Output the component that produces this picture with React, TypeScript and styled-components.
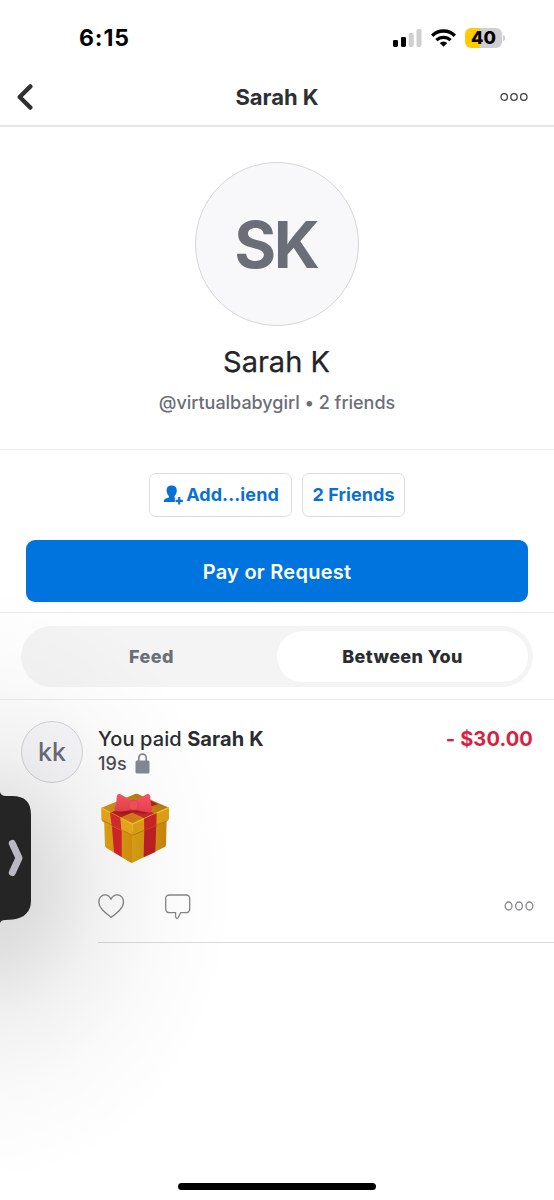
import React from "react";
import styled, { createGlobalStyle } from "styled-components";

const GlobalStyle = createGlobalStyle`
  * { box-sizing: border-box; }
  body { margin: 0; background: #fff; font-family: Inter, "Liberation Sans", sans-serif; }
  button { font-family: inherit; margin: 0; padding: 0; border: 0; background: none; }
  svg { display: block; flex: none; }
`;

const Screen = styled.div`
  position: relative;
  width: 554px;
  height: 1200px;
  overflow: hidden;
  background: #fff;
  display: flex;
  flex-direction: column;
`;

const StatusBar = styled.div`
  height: 69px;
  padding: 6px 49px 0 79px;
  display: flex;
  align-items: center;
  justify-content: space-between;
`;

const Clock = styled.div`
  font-size: 23px;
  font-weight: 700;
  color: #000;
  letter-spacing: 0.9px;
`;

const StatusIcons = styled.div`
  display: flex;
  align-items: center;
`;

const WifiSlot = styled.div`
  margin-left: 9px;
`;

const Battery = styled.div`
  margin-left: 9px;
  width: 37px;
  height: 20px;
  border-radius: 6px;
  background: linear-gradient(90deg, #ffcc00 0 41%, #cfcfcf 41%);
  font-size: 18px;
  line-height: 20px;
  font-weight: 800;
  text-align: center;
  color: #000;
`;

const BatteryTip = styled.div`
  width: 2px;
  height: 6px;
  margin-left: 1px;
  border-radius: 0 3px 3px 0;
  background: #cfcfcf;
`;

const NavBar = styled.header`
  height: 58px;
  padding: 0 25px 0 15px;
  border-bottom: 2px solid #e8e8e9;
  display: grid;
  grid-template-columns: 60px 1fr 50px;
  align-items: center;
`;

const NavTitle = styled.h1`
  margin: 0;
  font-size: 22px;
  font-weight: 700;
  letter-spacing: -0.05px;
  text-align: center;
  color: #2f3033;
`;

const MoreButton = styled.button`
  justify-self: end;
`;

const Profile = styled.section`
  height: 323px;
  padding-top: 35px;
  border-bottom: 1px solid #ebebec;
  display: flex;
  flex-direction: column;
  align-items: center;
`;

const Avatar = styled.div<{ $size: number; $font: number; $weight: number; $spacing?: number }>`
  width: ${(p) => p.$size}px;
  height: ${(p) => p.$size}px;
  flex: none;
  border-radius: 50%;
  border: 1px solid #d5d6da;
  background: ${(p) => (p.$size > 100 ? "#f8f8fb" : "rgba(248, 248, 251, 0.8)")};
  color: #6b6e76;
  font-size: ${(p) => p.$font}px;
  font-weight: ${(p) => p.$weight};
  letter-spacing: ${(p) => p.$spacing ?? 0}px;
  text-indent: ${(p) => p.$spacing ?? 0}px;
  display: flex;
  align-items: center;
  justify-content: center;
`;

const ProfileName = styled.h2`
  margin: 18px 0 0;
  padding-right: 1px;
  font-size: 29px;
  line-height: 36px;
  font-weight: 400;
  color: #232427;
  -webkit-text-stroke: 0.25px #232427;
`;

const Handle = styled.div`
  margin-top: 11px;
  font-size: 18px;
  line-height: 24px;
  font-weight: 500;
  letter-spacing: -0.03px;
  color: #6b6e76;
`;

const Actions = styled.section`
  height: 163px;
  padding: 23px 26px 0;
  border-bottom: 1px solid #ebebec;
`;

const ChipRow = styled.div`
  display: flex;
  justify-content: center;
  gap: 10px;
`;

const Chip = styled.button<{ $width: number }>`
  width: ${(p) => p.$width}px;
  height: 44px;
  padding-bottom: 1px;
  border: 1.5px solid #dcdde1;
  border-radius: 7px;
  background: #fff;
  color: #0a70d6;
  font-size: 18px;
  font-weight: 650;
  letter-spacing: 0.08px;
  white-space: nowrap;
  display: flex;
  align-items: center;
  justify-content: center;
  gap: 3px;
`;

const PayButton = styled.button`
  margin-top: 23px;
  padding-top: 1px;
  width: 502px;
  height: 62px;
  border-radius: 9px;
  background: #0074de;
  color: #fff;
  font-size: 20px;
  font-weight: 600;
  letter-spacing: 0.25px;
`;

const TabSection = styled.section`
  height: 87px;
  padding: 13px 21px 0;
  border-bottom: 1px solid #ebebec;
`;

const Tabs = styled.div`
  height: 61px;
  padding: 5px;
  border-radius: 31px;
  background: #f4f4f4;
  display: grid;
  grid-template-columns: 251px 251px;
`;

const Tab = styled.button<{ $active?: boolean }>`
  border-radius: 26px;
  background: ${(p) => (p.$active ? "#fff" : "transparent")};
  color: ${(p) => (p.$active ? "#2b2c2f" : "#6b6e76")};
  font-size: 18px;
  font-weight: 800;
  letter-spacing: 0.4px;
`;

const Story = styled.article`
  padding: 21px 0 0 21px;
  display: flex;
  gap: 15px;
`;

const StoryBody = styled.div`
  flex: 1;
  height: 222px;
  border-bottom: 1px solid #d9dadd;
  display: flex;
  flex-direction: column;
`;

const StoryHead = styled.div`
  margin-top: 4px;
  padding-right: 21px;
  display: flex;
  justify-content: space-between;
  font-size: 20px;
  line-height: 28px;
  font-weight: 500;
  letter-spacing: 0.1px;
  color: #2b2c2f;
  b { font-weight: 650; }
`;

const Amount = styled.span`
  font-weight: 650;
  letter-spacing: 0.15px;
  color: #d9213f;
`;

const Meta = styled.div`
  height: 22px;
  padding-bottom: 2px;
  display: flex;
  align-items: center;
  gap: 8px;
  font-size: 18px;
  font-weight: 450;
  letter-spacing: 0.1px;
  color: #4c4d52;
`;

const GiftSlot = styled.div`
  margin: 10px 0 0 -8px;
`;

const Reactions = styled.div`
  margin-top: 18px;
  padding-right: 20px;
  display: flex;
  align-items: center;
`;

const CommentSlot = styled.div`
  flex: 1;
  padding-left: 40px;
`;

const Shade = styled.div`
  position: absolute;
  left: 0;
  top: 540px;
  width: 300px;
  height: 660px;
  pointer-events: none;
  background: radial-gradient(
    ellipse 245px 300px at -10px 345px,
    rgba(0, 0, 0, 0.16) 0%,
    rgba(0, 0, 0, 0.12) 22%,
    rgba(0, 0, 0, 0.055) 45%,
    rgba(0, 0, 0, 0.02) 70%,
    rgba(0, 0, 0, 0.008) 88%,
    rgba(0, 0, 0, 0) 100%
  );
`;

const DrawerHandle = styled.div`
  position: absolute;
  left: 0;
  top: 792px;
`;

const HomeIndicator = styled.div`
  margin: auto auto 10px 178px;
  width: 198px;
  height: 7px;
  border-radius: 4px;
  background: #000;
`;

const Signal = () => (
  <svg width="29" height="18" viewBox="0 0 29 18">
    <rect x="0" y="11" width="5" height="7" rx="1.4" />
    <rect x="8" y="8" width="5" height="10" rx="1.4" />
    <rect x="15.7" y="4" width="5" height="14" rx="1.4" fill="#cfcfcf" />
    <rect x="23.5" y="0" width="5" height="18" rx="1.4" fill="#cfcfcf" />
  </svg>
);

const Wifi = () => (
  <svg width="25" height="18" viewBox="0 0 25 18">
    <path d="M1.2 6.700C7.400.5 17.600.5 23.800 6.700" fill="none" stroke="#000" strokeWidth="3.400" />
    <path d="M5.400 11.200C9.400 7.300 15.600 7.300 19.600 11.200" fill="none" stroke="#000" strokeWidth="3.200" />
    <path d="M8.700 14.100q3.800-3 7.600 0L12.500 17.800z" />
  </svg>
);

const Back = () => (
  <svg width="18" height="28" viewBox="0 0 18 28">
    <path d="M15.400 3.400 4.700 14l10.700 10.600" fill="none" stroke="#2f3033" strokeWidth="4.3" strokeLinecap="round" strokeLinejoin="round" />
  </svg>
);

const Dots = ({ color, rx, ry, gap }: { color: string; rx: number; ry: number; gap: number }) => (
  <svg width="30" height="12" viewBox="0 0 30 12" fill="none" stroke={color} strokeWidth="1.3">
    {[-1, 0, 1].map((i) => (
      <ellipse key={i} cx={15 + i * gap} cy="6" rx={rx} ry={ry} />
    ))}
  </svg>
);

const AddPerson = () => (
  <svg width="21" height="20" viewBox="0 0 21 20" fill="#0a70d6">
    <g transform="translate(1 0)">
      <path d="M8.600.4c3.300 0 5.300 1.900 5.200 5.200-.1 2.500-1 4.400-2.300 5.500v1.500l2 .9v3.600H.8c0-2.700 1-3.300 5.100-4.500v-1.500C4.600 9.800 3.700 8 3.600 5.600 3.500 2.300 5.400.4 8.600.4z" />
      <path d="M16.200 11v9M11.900 15.500h8.600" stroke="#fff" strokeWidth="4.500" />
      <path d="M16.200 12v7.500M12.500 15.800h7.400" stroke="#0a70d6" strokeWidth="2.200" />
    </g>
  </svg>
);

const Lock = () => (
  <svg width="15" height="21" viewBox="0 0 15 21">
    <path d="M3.800 9V4.800a3.700 3.700 0 0 1 7.400 0V9" fill="none" stroke="#858792" strokeWidth="1.700" />
    <rect x="0.500" y="7.500" width="14" height="13" rx="1.500" fill="#858792" />
  </svg>
);

const Gift = () => (
  <svg width="90" height="90" viewBox="0 0 270 270">
    <defs>
      <linearGradient id="left" x1="0" x2="1"><stop stopColor="#e3a414" /><stop offset="1" stopColor="#d6900f" /></linearGradient>
      <linearGradient id="right" x1="0" x2="1"><stop stopColor="#dba016" /><stop offset="1" stopColor="#c98509" /></linearGradient>
      <linearGradient id="top" x1="0" x2="1" y1="1" y2="0"><stop stopColor="#e6a41d" /><stop offset="1" stopColor="#a96d0c" /></linearGradient>
      <linearGradient id="bow" x1="0" x2="0" y1="0" y2="1"><stop stopColor="#fb5664" /><stop offset="1" stopColor="#e9404f" /></linearGradient>
    </defs>
    <path d="M42 100 126 140V234Q120 232 114 228L48 188Q45 186 45 182z" fill="url(#left)" />
    <path d="M126 140 230 100 228 180Q228 184 224 186L126 234z" fill="url(#right)" />
    <path d="M65 112 95 126V216L72 202z" fill="#d5232b" />
    <path d="M163 125 199 110 196 201 161 217z" fill="#bd2025" />
    <path d="M33 69 130 29Q140 24 148 29L237 68 127 118z" fill="url(#top)" />
    <path d="M60 83 170 42 205 57 88 99z" fill="#b32020" />
    <path d="M80 64 162 100 196 86 120 52z" fill="#c5292a" />
    <path d="M90 98 126 83 160 98 127 114z" fill="#d67c1c" />
    <path d="M34 68 127 118V152L38 110Q34 107 34 102z" fill="#e9a91b" />
    <path d="M127 118 237 68V101Q237 105 231 108L127 152z" fill="#dda015" />
    <path d="M37 106 127 151 232 107" fill="none" stroke="#a96b08" strokeWidth="2" />
    <path d="M34 69 127 117 236 68" fill="none" stroke="#f8c51c" strokeWidth="4" strokeLinejoin="round" />
    <path d="M60 82 91 98 94 136 65 122z" fill="#d82a31" />
    <path d="M162 101 200 84 199 121 163 137z" fill="#c92429" />
    <path d="M77 76Q100 84 130 76 156 84 184 80L160 87 130 82 100 87z" fill="#8f1717" opacity=".6" />
    <path d="M124 46Q108 37 90 27 80 25 80 38 81 55 74 69 72 79 82 79 103 82 124 72z" fill="url(#bow)" />
    <path d="M136 46Q154 37 171 27 182 25 181 40 181 55 186 69 188 81 178 83 158 81 136 72z" fill="url(#bow)" />
    <rect x="117" y="46" width="27" height="29" rx="12" fill="#f4505f" stroke="#d93c4c" strokeWidth="1.500" />
  </svg>
);

const Heart = () => (
  <svg width="27" height="26" viewBox="0 0 27 26" fill="none" stroke="#85868a" strokeWidth="1.300" strokeLinejoin="round">
    <path d="M13 6.300C11.800 3.400 9.600 1.900 7 1.900 3.400 1.900.8 4.800.8 8.900.8 15 7 19.500 13.200 24.300 19.500 19.500 25.500 15 25.500 8.900 25.500 4.800 22.900 1.900 19.300 1.900 16.500 1.900 14.200 3.400 13 6.300z" />
  </svg>
);

const Comment = () => (
  <svg width="26" height="26" viewBox="0 0 26 26" fill="none" stroke="#85868a" strokeWidth="1.300" strokeLinejoin="round">
    <path d="M4.200 2h17a3.500 3.500 0 0 1 3.500 3.500v10.700a3.500 3.500 0 0 1-3.500 3.500H15.500L13.300 24.600Q11.500 26.600 10.600 23.800V19.700H4.200A3.500 3.500 0 0 1 .7 16.200v-10.700A3.500 3.500 0 0 1 4.200 2z" />
  </svg>
);

const Drawer = () => (
  <svg width="32" height="132" viewBox="0 0 32 132">
    <path d="M0 0Q1 4 6 4H12C25 4 31 10 31 23V109C31 120 24 126 13 127.500L5 128Q1 128 0 131z" fill="#252525" />
    <path d="M12.300 51.500 19 66 12.300 80.500" fill="none" stroke="#bab8c0" strokeWidth="7" strokeLinecap="round" strokeLinejoin="round" />
  </svg>
);

export default function App() {
  return (
    <Screen>
      <GlobalStyle />
      <StatusBar>
        <Clock>6:15</Clock>
        <StatusIcons>
          <Signal />
          <WifiSlot><Wifi /></WifiSlot>
          <Battery>40</Battery>
          <BatteryTip />
        </StatusIcons>
      </StatusBar>
      <NavBar>
        <Back />
        <NavTitle>Sarah K</NavTitle>
        <MoreButton><Dots color="#3d3e42" rx={3.2} ry={3.3} gap={9.8} /></MoreButton>
      </NavBar>
      <Profile>
        <Avatar $size={164} $font={64} $weight={650} $spacing={-2.5}>SK</Avatar>
        <ProfileName>Sarah K</ProfileName>
        <Handle>@virtualbabygirl • 2 friends</Handle>
      </Profile>
      <Actions>
        <ChipRow>
          <Chip $width={143}><AddPerson />Add...iend</Chip>
          <Chip $width={103}>2 Friends</Chip>
        </ChipRow>
        <PayButton>Pay or Request</PayButton>
      </Actions>
      <TabSection>
        <Tabs>
          <Tab>Feed</Tab>
          <Tab $active>Between You</Tab>
        </Tabs>
      </TabSection>
      <Story>
        <Avatar $size={62} $font={25} $weight={500}>kk</Avatar>
        <StoryBody>
          <StoryHead>
            <span>You paid <b>Sarah K</b></span>
            <Amount>- $30.00</Amount>
          </StoryHead>
          <Meta>19s <Lock /></Meta>
          <GiftSlot><Gift /></GiftSlot>
          <Reactions>
            <Heart />
            <CommentSlot><Comment /></CommentSlot>
            <Dots color="#85868a" rx={3.4} ry={4} gap={10.400} />
          </Reactions>
        </StoryBody>
      </Story>
      <HomeIndicator />
      <Shade />
      <DrawerHandle><Drawer /></DrawerHandle>
    </Screen>
  );
}
